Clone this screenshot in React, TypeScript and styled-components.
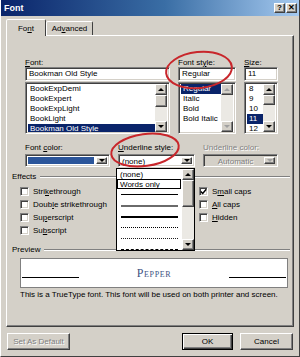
import * as React from 'react';
import styled, { createGlobalStyle, css } from 'styled-components';

const GlobalStyle = createGlobalStyle`
  html, body { margin: 0; padding: 0; background: #d4d0c8; }
  body {
    font-family: "Liberation Sans", Arial, sans-serif;
    font-size: 8px;
    color: #000;
  }
  * { box-sizing: border-box; }
  u { text-underline-offset: 1px; }
`;

const raised = css`
  border: 1px solid;
  border-color: #ffffff #404040 #404040 #ffffff;
  box-shadow: inset -1px -1px #808080;
  background: #d4d0c8;
`;

const sunken = css`
  border: 1px solid;
  border-color: #808080 #ffffff #ffffff #808080;
  box-shadow: inset 1px 1px #404040, inset -1px -1px #d4d0c8;
`;

const disabledText = css`
  color: #808080;
  text-shadow: 1px 1px #ffffff;
`;

const Window = styled.div`
  position: relative;
  width: 300px;
  height: 357px;
  display: flex;
  flex-direction: column;
  background: #d4d0c8;
  border-left: 1px solid #ffffff;
  border-right: 1px solid #404040;
  border-bottom: 1px solid #404040;
  overflow: hidden;
`;

const TitleBar = styled.div`
  height: 16px;
  flex-shrink: 0;
  display: flex;
  align-items: center;
  justify-content: space-between;
  padding: 0 2px 0 3px;
  background: linear-gradient(to right, #0a246a, #3a6ea5 55%, #a6caf0);
  color: #fff;
  font-weight: bold;
  font-size: 9px;
`;

const TitleButtons = styled.div`
  display: flex;
  gap: 1px;
`;

const TitleButton = styled.div`
  ${raised};
  width: 11px;
  height: 10px;
  display: flex;
  align-items: center;
  justify-content: center;
  color: #000;
  font-size: 8px;
  font-weight: bold;
  line-height: 1;
`;

const Body = styled.div`
  display: flex;
  flex-direction: column;
  padding: 3px 5px 0 5px;
`;

const TabStrip = styled.div`
  display: flex;
  align-items: flex-end;
  height: 16px;
`;

const Tab = styled.div<{ $active?: boolean; $w: number }>`
  position: relative;
  width: ${p => p.$w}px;
  height: ${p => (p.$active ? 17 : 14)}px;
  margin-bottom: ${p => (p.$active ? -1 : 0)}px;
  z-index: ${p => (p.$active ? 2 : 1)};
  border: 1px solid;
  border-bottom: none;
  border-color: #ffffff #404040 transparent #ffffff;
  border-radius: 2px 2px 0 0;
  background: #d4d0c8;
  display: flex;
  align-items: ${p => (p.$active ? 'flex-start' : 'center')};
  padding-top: ${p => (p.$active ? 4 : 0)}px;
  justify-content: center;
  white-space: nowrap;
`;

const Panel = styled.div`
  position: relative;
  height: 292px;
  border: 1px solid;
  border-color: #ffffff #404040 #404040 #ffffff;
  box-shadow: inset -1px -1px #808080;
  padding-top: 22px;
`;

const TopRow = styled.div`
  display: grid;
  grid-template-columns: 145px 58px 34px;
  column-gap: 8px;
  padding-left: 18px;
`;

const SecondRow = styled.div`
  display: grid;
  grid-template-columns: 85px 77px 75px;
  column-gap: 8px;
  padding-left: 18px;
  margin-top: 9px;
`;

const Field = styled.div`
  position: relative;
  display: flex;
  flex-direction: column;
`;

const Label = styled.div<{ $off?: boolean }>`
  height: 9px;
  line-height: 9px;
  white-space: nowrap;
  ${p => p.$off && disabledText};
`;

const TextBox = styled.div`
  ${sunken};
  height: 14px;
  background: #fff;
  padding: 0 3px;
  line-height: 12px;
  white-space: nowrap;
  overflow: hidden;
`;

const ListBox = styled.div`
  ${sunken};
  margin-top: 1px;
  height: 52px;
  background: #fff;
  display: flex;
  padding: 1px 2px 1px 2px;
`;

const Items = styled.div`
  flex: 1;
  overflow: hidden;
`;

const Item = styled.div<{ $selected?: boolean }>`
  height: 10px;
  line-height: 10px;
  padding-left: 2px;
  white-space: nowrap;
  ${p => p.$selected && css`
    background: #0a246a;
    color: #fff;
  `};
`;

const ScrollBar = styled.div`
  width: 12px;
  flex-shrink: 0;
  display: flex;
  flex-direction: column;
  background: #ebe9e4;
`;

const ScrollButton = styled.div`
  ${raised};
  height: 11px;
  flex-shrink: 0;
  display: flex;
  align-items: center;
  justify-content: center;
`;

const Thumb = styled.div<{ $h: number }>`
  ${raised};
  height: ${p => p.$h}px;
  flex-shrink: 0;
`;

const Track = styled.div`
  flex: 1;
`;

const Arrow = styled.span<{ $dir: 'up' | 'down'; $off?: boolean }>`
  width: 0;
  height: 0;
  border-left: 3px solid transparent;
  border-right: 3px solid transparent;
  ${p => (p.$dir === 'up' ? 'border-bottom' : 'border-top')}: 3px solid ${p => (p.$off ? '#a0a0a0' : '#000')};
`;

const Combo = styled.div<{ $off?: boolean }>`
  ${sunken};
  margin-top: 2px;
  height: 13px;
  display: flex;
  padding: 2px;
  background: ${p => (p.$off ? '#d4d0c8' : '#fff')};
`;

const ComboValue = styled.div<{ $off?: boolean; $center?: boolean }>`
  flex: 1;
  line-height: 9px;
  padding-left: 1px;
  white-space: nowrap;
  text-align: ${p => (p.$center ? 'center' : 'left')};
  ${p => p.$off && disabledText};
`;

const Swatch = styled.div<{ $color: string }>`
  flex: 1;
  margin: 0 2px 0 0;
  background: ${p => p.$color};
`;

const DropButton = styled.div`
  ${raised};
  width: 11px;
  flex-shrink: 0;
  display: flex;
  align-items: center;
  justify-content: center;
`;

const Dropdown = styled.div`
  position: absolute;
  z-index: 5;
  top: 100%;
  left: -2px;
  width: 79px;
  height: 83px;
  margin-top: 1px;
  border: 1px solid #000;
  background: #fff;
  display: flex;
`;

const DropItems = styled.div`
  flex: 1;
  overflow: hidden;
  padding-right: 1px;
`;

const DropText = styled.div<{ $focus?: boolean }>`
  height: 10px;
  line-height: 9px;
  padding-left: 2px;
  white-space: nowrap;
  border: 1px solid ${p => (p.$focus ? '#000' : 'transparent')};
`;

const DropLineRow = styled.div`
  height: 11px;
  display: flex;
  align-items: center;
  padding: 0 3px 0 4px;
`;

const LineSample = styled.div<{ $w: number; $style: string; $color?: string }>`
  flex: 1;
  border-top: ${p => p.$w}px ${p => p.$style} ${p => p.$color || '#000'};
`;

const SectionHeader = styled.div<{ $mt: number }>`
  display: flex;
  align-items: center;
  height: 9px;
  margin-top: ${p => p.$mt}px;
  padding: 0 3px 0 5px;
`;

const Rule = styled.div`
  flex: 1;
  margin-left: 4px;
  border-top: 1px solid #808080;
  border-bottom: 1px solid #ffffff;
`;

const Effects = styled.div`
  display: grid;
  grid-template-columns: 179px 1fr;
  margin-top: 4px;
  padding-left: 13px;
`;

const CheckColumn = styled.div`
  display: flex;
  flex-direction: column;
`;

const CheckRow = styled.div`
  height: 13px;
  display: flex;
  align-items: center;
  gap: 4px;
  white-space: nowrap;
`;

const CheckBox = styled.div`
  ${sunken};
  width: 9px;
  height: 9px;
  background: #fff;
  display: flex;
  align-items: center;
  justify-content: center;
`;

const PreviewBox = styled.div`
  margin: 4px 5px 0 13px;
  height: 30px;
  border: 1px solid #808080;
  background: #fff;
  display: flex;
  align-items: center;
  padding: 0 1px;
`;

const PreviewLine = styled.div`
  width: 57px;
  height: 1px;
  margin-top: 8px;
  background: #000;
`;

const PreviewText = styled.div`
  flex: 1;
  text-align: center;
  font-family: "Liberation Serif", "Times New Roman", serif;
  font-variant: small-caps;
  font-size: 12px;
  letter-spacing: 0.6px;
  color: #3d5283;
`;

const Note = styled.div`
  margin-top: 2px;
  padding-left: 13px;
  height: 9px;
  line-height: 9px;
  white-space: nowrap;
`;

const ButtonRow = styled.div`
  display: flex;
  margin-top: 6px;
  padding: 0 1px;
`;

const ButtonGroup = styled.div`
  display: flex;
  gap: 7px;
  margin-left: auto;
`;

const Button = styled.div<{ $w: number; $off?: boolean; $default?: boolean }>`
  ${raised};
  width: ${p => p.$w}px;
  height: 17px;
  display: flex;
  align-items: center;
  justify-content: center;
  white-space: nowrap;
  ${p => p.$off && disabledText};
  ${p => p.$default && css`
    border: 1px solid #000;
    box-shadow: inset 1px 1px #fff, inset -1px -1px #404040, inset -2px -2px #808080;
  `};
`;

const Annotations = styled.svg`
  position: absolute;
  left: 0;
  top: 0;
  z-index: 10;
  pointer-events: none;
`;

const fonts = ['BookExpDemi', 'BookExpert', 'BookExpLight', 'BookLight', 'Bookman Old Style'];
const styles = ['Regular', 'Italic', 'Bold', 'Bold Italic'];
const sizes = ['8', '9', '10', '11', '12'];

const Scroll = ({ thumb, off }: { thumb?: number; off?: boolean }) => (
  <ScrollBar>
    <ScrollButton><Arrow $dir="up" $off={off} /></ScrollButton>
    {thumb ? <Thumb $h={thumb} /> : null}
    <Track />
    <ScrollButton><Arrow $dir="down" $off={off} /></ScrollButton>
  </ScrollBar>
);

const Check = ({ checked, children }: { checked?: boolean; children: React.ReactNode }) => (
  <CheckRow>
    <CheckBox>
      {checked && (
        <svg width="7" height="7" viewBox="0 0 7 7">
          <path d="M0.8 3.4 L2.7 5.4 L6.3 1.2" stroke="#000" strokeWidth="1.5" fill="none" />
        </svg>
      )}
    </CheckBox>
    <span>{children}</span>
  </CheckRow>
);

export default function App() {
  return (
    <>
      <GlobalStyle />
      <Window>
        <TitleBar>
          <span>Font</span>
          <TitleButtons>
            <TitleButton>?</TitleButton>
            <TitleButton>✕</TitleButton>
          </TitleButtons>
        </TitleBar>

        <Body>
          <TabStrip>
            <Tab $active $w={40}>Fo<u>n</u>t</Tab>
            <Tab $w={47}>Ad<u>v</u>anced</Tab>
          </TabStrip>

          <Panel>
            <TopRow>
              <Field>
                <Label><u>F</u>ont:</Label>
                <TextBox>Bookman Old Style</TextBox>
                <ListBox>
                  <Items>
                    {fonts.map((f, i) => (
                      <Item key={f} $selected={i === fonts.length - 1}>{f}</Item>
                    ))}
                  </Items>
                  <Scroll thumb={12} />
                </ListBox>
              </Field>
              <Field>
                <Label>Font st<u>y</u>le:</Label>
                <TextBox>Regular</TextBox>
                <ListBox>
                  <Items>
                    {styles.map((s, i) => (
                      <Item key={s} $selected={i === 0}>{s}</Item>
                    ))}
                  </Items>
                  <Scroll off />
                </ListBox>
              </Field>
              <Field>
                <Label><u>S</u>ize:</Label>
                <TextBox>11</TextBox>
                <ListBox>
                  <Items>
                    {sizes.map((s, i) => (
                      <Item key={s} $selected={i === 3}>{s}</Item>
                    ))}
                  </Items>
                  <Scroll thumb={10} />
                </ListBox>
              </Field>
            </TopRow>

            <SecondRow>
              <Field>
                <Label>Font <u>c</u>olor:</Label>
                <Combo>
                  <Swatch $color="#2b559a" />
                  <DropButton><Arrow $dir="down" /></DropButton>
                </Combo>
              </Field>
              <Field>
                <Label><u>U</u>nderline style:</Label>
                <Combo>
                  <ComboValue>(none)</ComboValue>
                  <DropButton><Arrow $dir="down" /></DropButton>
                </Combo>
                <Dropdown>
                  <DropItems>
                    <DropText>(none)</DropText>
                    <DropText $focus>Words only</DropText>
                    <DropLineRow><LineSample $w={1} $style="solid" /></DropLineRow>
                    <DropLineRow><LineSample $w={2} $style="solid" $color="#6a6a6a" /></DropLineRow>
                    <DropLineRow><LineSample $w={2} $style="solid" /></DropLineRow>
                    <DropLineRow><LineSample $w={1} $style="dotted" /></DropLineRow>
                    <DropLineRow><LineSample $w={1} $style="dotted" $color="#202020" /></DropLineRow>
                    <DropLineRow><LineSample $w={1} $style="dashed" /></DropLineRow>
                  </DropItems>
                  <Scroll thumb={27} />
                </Dropdown>
              </Field>
              <Field>
                <Label $off>Underline color:</Label>
                <Combo $off>
                  <ComboValue $off $center>Automatic</ComboValue>
                  <DropButton><Arrow $dir="down" $off /></DropButton>
                </Combo>
              </Field>
            </SecondRow>

            <SectionHeader $mt={5}>
              <span>Effects</span>
              <Rule />
            </SectionHeader>
            <Effects>
              <CheckColumn>
                <Check>Stri<u>k</u>ethrough</Check>
                <Check>Doub<u>l</u>e strikethrough</Check>
                <Check>Su<u>p</u>erscript</Check>
                <Check>Su<u>b</u>script</Check>
              </CheckColumn>
              <CheckColumn>
                <Check checked>S<u>m</u>all caps</Check>
                <Check><u>A</u>ll caps</Check>
                <Check><u>H</u>idden</Check>
              </CheckColumn>
            </Effects>

            <SectionHeader $mt={8}>
              <span>Preview</span>
              <Rule />
            </SectionHeader>
            <PreviewBox>
              <PreviewLine />
              <PreviewText>Pepper</PreviewText>
              <PreviewLine />
            </PreviewBox>
            <Note>This is a TrueType font. This font will be used on both printer and screen.</Note>
          </Panel>

          <ButtonRow>
            <Button $w={63} $off>Set As Default</Button>
            <ButtonGroup>
              <Button $w={51} $default>OK</Button>
              <Button $w={53}>Cancel</Button>
            </ButtonGroup>
          </ButtonRow>
        </Body>

        <Annotations width="300" height="357" viewBox="0 0 300 357">
          <ellipse cx="198" cy="70" rx="33" ry="18" transform="rotate(-6 198 70)" fill="none" stroke="#c8262b" strokeWidth="2" />
          <ellipse cx="144" cy="150" rx="34" ry="16" transform="rotate(-8 144 150)" fill="none" stroke="#c8262b" strokeWidth="2" />
        </Annotations>
      </Window>
    </>
  );
}
